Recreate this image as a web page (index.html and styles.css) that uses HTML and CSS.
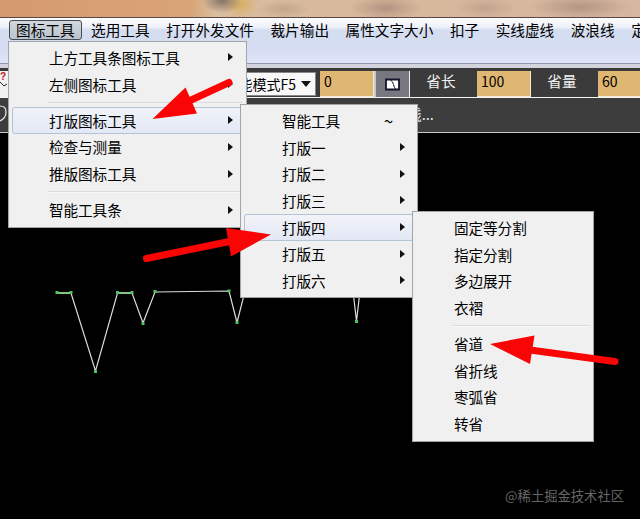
FILE: index.html
```
<!DOCTYPE html>
<html lang="zh">
<head>
    <meta charset="utf-8">
    <title>打版</title>
    <link rel="stylesheet" href="styles.css">
</head>
<body>
    <div class="titlebar"></div>
    <div class="menubar">
        <span class="open">图标工具</span>
        <span>选用工具</span>
        <span>打开外发文件</span>
        <span>裁片输出</span>
        <span>属性文字大小</span>
        <span>扣子</span>
        <span>实线虚线</span>
        <span>波浪线</span>
        <span>定</span>
    </div>
    <div class="toolbar">
        <div class="help">
            <svg width="8" height="27"><text x="0" y="9" class="q">?</text><path d="M0 11l4 4 3-2" fill="none" stroke="#222"/></svg>
        </div>
        <div class="combo"><span>智能模式F5</span><i class="drop"></i></div>
        <div class="field">0</div>
        <div class="iconbtn">
            <svg width="16" height="13"><path d="M1 1.500h13v10h-13z" fill="#fff" stroke="#14142e" stroke-width="1.800"/><path d="M5 1.500q3 2 3.500 5t2.500 5" fill="none" stroke="#14142e"/></svg>
        </div>
        <div class="name">省长</div>
        <div class="field">100</div>
        <div class="name">省量</div>
        <div class="field last">60</div>
    </div>
    <div class="hint">
        <svg width="8" height="32"><path d="M0 8q6 0 6 6t-6 9" fill="none" stroke="#eee" stroke-width="1.200"/></svg>
        <span class="hint-end">线...</span>
    </div>
    <div class="canvas">
        <svg class="curve" width="640" height="386" viewBox="0 133 640 386">
            <path d="M57 293H71L95.500 371L117.500 293H132L143 323L155 292L229 291L237 322.500L245 291L353 291L356.500 321L360 291" fill="none" stroke="#ddd" stroke-width="1.200"/>
            <path d="M57 293H71M117.500 293H132" stroke="#8de08d" stroke-width="1.400"/>
            <g fill="#4fc45f">
                <rect x="55.500" y="291" width="3" height="3"/>
                <rect x="69.500" y="291" width="3" height="3"/>
                <rect x="94" y="370" width="3" height="3"/>
                <rect x="116" y="291" width="3" height="3"/>
                <rect x="130.500" y="291" width="3" height="3"/>
                <rect x="141.500" y="322" width="3" height="3"/>
                <rect x="153.500" y="290" width="3" height="3"/>
                <rect x="227.500" y="289.500" width="3" height="3"/>
                <rect x="235.500" y="321" width="3" height="3"/>
                <rect x="355" y="320" width="3" height="3"/>
            </g>
        </svg>
        <div class="watermark">@稀土掘金技术社区</div>
    </div>

    <!-- dropdown and its submenus -->
    <div class="menu menu-main">
        <div class="item sub">上方工具条图标工具</div>
        <div class="item sub">左侧图标工具</div>
        <div class="sep"></div>
        <div class="item sub active">打版图标工具</div>
        <div class="item sub">检查与测量</div>
        <div class="item sub">推版图标工具</div>
        <div class="sep"></div>
        <div class="item sub">智能工具条</div>
    </div>
    <div class="menu menu-second">
        <div class="item">智能工具<span class="key">~</span></div>
        <div class="item sub">打版一</div>
        <div class="item sub">打版二</div>
        <div class="item sub">打版三</div>
        <div class="item sub active">打版四</div>
        <div class="item sub">打版五</div>
        <div class="item sub">打版六</div>
    </div>
    <div class="menu menu-third">
        <div class="item">固定等分割</div>
        <div class="item">指定分割</div>
        <div class="item">多边展开</div>
        <div class="item">衣褶</div>
        <div class="sep"></div>
        <div class="item">省道</div>
        <div class="item">省折线</div>
        <div class="item">枣弧省</div>
        <div class="item">转省</div>
    </div>

    <!-- red arrows -->
    <svg class="arrows" width="640" height="519">
        <g stroke="#fa0505" stroke-width="7" stroke-linecap="round">
            <path d="M229 82.500L188 101.500"/>
            <path d="M146.500 258.500L232 241"/>
            <path d="M615 361.500L530 350"/>
        </g>
        <g fill="#fa0505">
            <path d="M152.500 119L185.500 87.500L197 113.500z"/>
            <path d="M271 234.500L226 228L231 256.500z"/>
            <path d="M490 344L534.500 335.500L530 364z"/>
        </g>
    </svg>
</body>
</html>
```
FILE: styles.css
```
body {
    margin: 0;
    width: 640px;
    height: 519px;
    overflow: hidden;
    display: flex;
    flex-direction: column;
    position: relative;
    background: #000;
    color: #000;
    font-family: "Noto Sans CJK SC", sans-serif;
    font-size: 14.65px;
    white-space: nowrap;
}

/*blurred window caption*/
.titlebar {
    height: 17px;
    border-bottom: 1px solid #55484a;
    background:
        radial-gradient(ellipse 20px 12px at 222px 1px, #857466, rgba(133, 116, 102, 0.5) 50%, rgba(133, 116, 102, 0)),
        radial-gradient(ellipse 18px 14px at 240px 4px, #d9ae60, rgba(217, 174, 96, 0)),
        radial-gradient(ellipse 26px 9px at 284px 9px, #c2a78c, rgba(194, 167, 140, 0)),
        radial-gradient(ellipse 36px 12px at 386px 8px, #b39381, rgba(179, 147, 129, 0)),
        radial-gradient(ellipse 30px 10px at 485px 8px, #c2a28d, rgba(194, 162, 141, 0)),
        radial-gradient(ellipse 50px 12px at 580px 7px, #b39583, rgba(179, 149, 131, 0)),
        linear-gradient(90deg, #d59a6d, #d9a477 190px, #d9bd9e 215px, #d8b99b 330px, #d6b6a0);
}

/*menu bar*/
.menubar {
    height: 46px;
    box-sizing: border-box;
    display: flex;
    align-items: flex-start;
    gap: 16.5px;
    padding: 2px 0 0 16px;
    border-bottom: 1px solid #9298aa;
    background: linear-gradient(#fdfdfe, #eef1f9 9px, #d5def0 12px, #d5dcf2 32px, #e0e6fa);
}

.menubar span {
    line-height: 20px;
    flex: none;
}

.menubar .open {
    margin: 0 -7px 0 -7px;
    padding: 0 6px;
    line-height: 18px;
    border: 1px solid #454b53;
    border-radius: 3px;
    background: linear-gradient(#d2d8dd, #b9c2ce);
}

/*tool bar*/
.toolbar {
    height: 34px;
    box-sizing: border-box;
    display: flex;
    border-top: 4px solid #d3d5de;
    border-bottom: 1px solid #f4f4f0;
    background: #3b3b3b;
    padding-top: 3px;
}

.help {
    width: 9px;
    background: #f2f0f0;
}

.q {
    font: bold 10px "Liberation Sans", sans-serif;
    fill: #c3172b;
}

.combo {
    width: 307px;
    box-sizing: border-box;
    display: flex;
    align-items: center;
    justify-content: flex-end;
    gap: 5px;
    margin: 1px 4px 1px 0;
    padding-right: 4px;
    border: 1px solid #888;
    background: #f8f8f8;
    font-size: 14px;
}

.drop {
    border: 5px solid transparent;
    border-top: 6px solid #111;
    border-bottom: 0;
}

.field {
    width: 54px;
    box-sizing: border-box;
    padding-left: 4px;
    border-right: 1px solid #f5ead5;
    border-bottom: 1px solid #f5ead5;
    background: #dfb672;
    font-size: 14px;
    line-height: 21px;
}

.iconbtn {
    width: 36px;
    box-sizing: border-box;
    display: flex;
    align-items: center;
    justify-content: center;
    border-left: 2px solid #c8c8c8;
    border-right: 1px solid #eee;
    background: #77777f;
}

.name {
    width: 67px;
    color: #f2f2f2;
    line-height: 20px;
    text-align: center;
    box-sizing: border-box;
    padding-right: 5px;
}

.last {
    flex: 1;
    border-right: 0;
}

/*prompt line under the tools*/
.hint {
    height: 34px;
    display: flex;
    justify-content: space-between;
    color: #e8e8e8;
    background: #3d3d3d;
    border-bottom: 1px solid #c9c9c9;
    line-height: 32px;
}

.hint-end {
    width: 233px;
}

.canvas {
    flex: 1;
    display: flex;
    position: relative;
}

.watermark {
    position: absolute;
    right: 16px;
    bottom: 13px;
    color: #666;
    font-size: 13.3px;
    line-height: 20px;
}

/*menus*/
.menu {
    position: absolute;
    box-sizing: border-box;
    border: 1px solid #a4a4a8;
    padding: 2.5px 3px;
    background: #f0f0f0;
}

.menu-main {
    left: 8px;
    top: 41px;
    width: 239px;
    height: 187px;
}

.menu-second {
    left: 240px;
    top: 104px;
    width: 178px;
    height: 194px;
}

.menu-third {
    left: 412px;
    top: 211px;
    width: 182px;
    height: 231px;
}

.item {
    height: 26.7px;
    box-sizing: border-box;
    display: flex;
    align-items: center;
    justify-content: space-between;
    padding: 0 13px 1px 37px;
    border: 1px solid transparent;
    border-radius: 3px;
    letter-spacing: -0.1px;
}

.menu-main .item {
    padding-left: 36px;
}

.menu-main .item.sub {
    padding-right: 9px;
}

.item.active {
    border-color: #b5c3d8;
    background: linear-gradient(#f1f3f8, #e2e8f5);
}

.sub::after {
    content: "";
    border: 4.5px solid transparent;
    border-left: 5px solid #111;
    border-right: 0;
}

.menu-second .item {
    padding-right: 8px;
}

.item .key {
    margin-right: 12px;
    font-size: 17px;
}

.sep {
    height: 9.5px;
    margin-left: 36px;
    box-sizing: border-box;
    border-bottom: 4px solid transparent;
    background: linear-gradient(#f0f0f0 4px, #dcdcdc 4px, #dcdcdc 5px, #f8f8f8 5px) no-repeat;
    background-clip: padding-box;
}

.arrows {
    position: absolute;
    left: 0;
    top: 0;
}
```
